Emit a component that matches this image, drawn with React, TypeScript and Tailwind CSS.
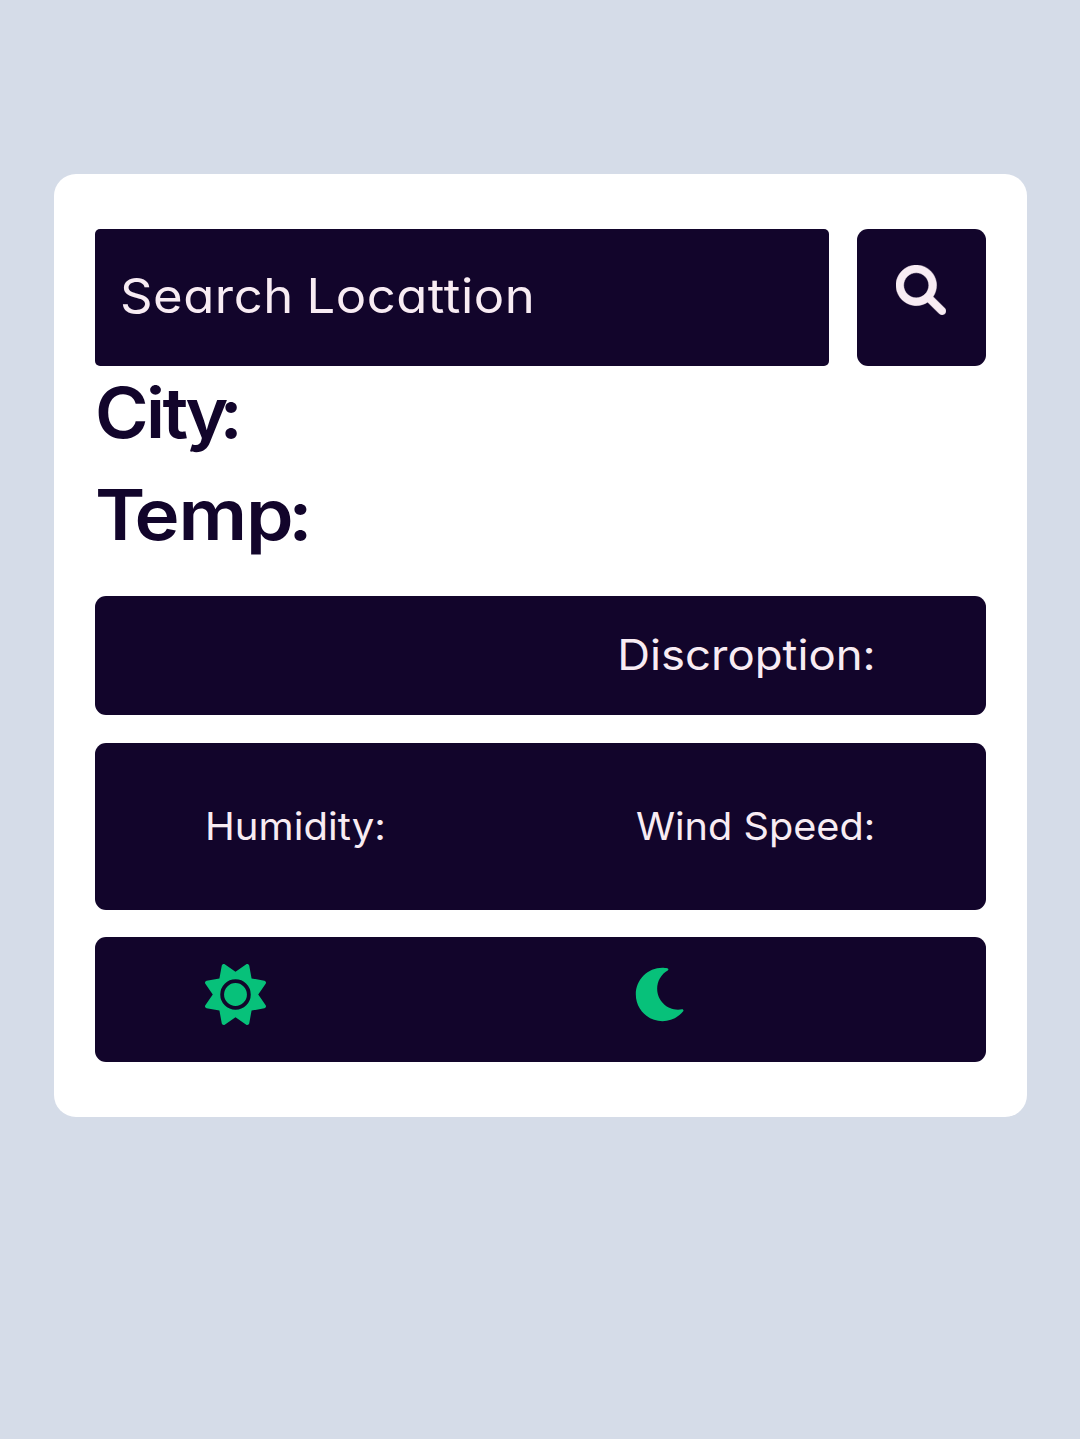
const panel = "flex items-center rounded-[11px] bg-[#12052b]";

function SearchIcon() {
  return (
    <svg viewBox="0 0 512 512" className="size-[50px]" fill="currentColor" stroke="currentColor" strokeWidth="4" aria-hidden="true">
      <path d="M500.3 443.7l-119.7-119.7c27.22-40.41 40.65-90.9 33.46-144.7C401.8 87.79 326.8 13.32 235.2 1.723C99.01-15.51-15.51 99.01 1.724 235.2c11.6 91.64 86.08 166.7 177.6 178.9c53.8 7.189 104.3-6.236 144.7-33.46l119.7 119.7c15.62 15.62 40.95 15.62 56.57 0C515.9 484.7 515.9 459.3 500.3 443.7zM79.1 208c0-70.58 57.42-128 128-128s128 57.42 128 128c0 70.58-57.42 128-128 128S79.1 278.6 79.1 208z" />
    </svg>
  );
}

function SunIcon() {
  return (
    <svg viewBox="0 0 512 512" className="size-[61px]" fill="currentColor" aria-hidden="true">
      <path d="M361.5 1.2c5 2.1 8.6 6.6 9.6 11.9L391 121l107.900 19.800c5.300 1 9.800 4.600 11.900 9.600s1.500 10.700-1.600 15.200L446.900 256l62.300 90.300c3.100 4.500 3.700 10.200 1.600 15.200s-6.600 8.600-11.900 9.600L391 391 371.100 498.900c-1 5.300-4.600 9.800-9.600 11.900s-10.700 1.500-15.200-1.600L256 446.900l-90.300 62.300c-4.500 3.100-10.200 3.700-15.200 1.600s-8.600-6.600-9.600-11.900L121 391 13.100 371.100c-5.300-1-9.800-4.600-11.900-9.600s-1.500-10.700 1.600-15.200L65.100 256 2.800 165.700c-3.100-4.500-3.700-10.200-1.600-15.200s6.600-8.600 11.900-9.600L121 121 140.900 13.100c1-5.300 4.600-9.800 9.600-11.900s10.700-1.500 15.200 1.600L256 65.100 346.300 2.800c4.500-3.100 10.200-3.700 15.200-1.600zM160 256a96 96 0 1 1 192 0 96 96 0 1 1 -192 0zm224 0a128 128 0 1 0 -256 0 128 128 0 1 0 256 0z" />
    </svg>
  );
}

function MoonIcon() {
  return (
    <svg viewBox="0 0 512 512" className="size-[61px]" fill="currentColor" aria-hidden="true">
      <path d="M32 256c0-123.8 100.3-224 223.8-224c11.36 0 29.7 1.668 40.9 3.746c9.616 1.777 11.75 14.63 3.279 19.44C245 86.5 211.2 144.6 211.2 207.8c0 109.7 99.71 193 208.3 172.3c9.561-1.805 16.28 9.324 10.11 16.95C387.9 448.6 324.8 480 255.8 480C132.1 480 32 379.6 32 256z" />
    </svg>
  );
}

export default function App() {
  return (
    <main className="min-h-[1439px] bg-[#d5dce8] pt-[174px] font-['Inter',sans-serif] whitespace-nowrap text-[#f8ecf3] [font-feature-settings:'cv11','ss03']">
      <section className="mx-auto h-[943px] w-[973px] rounded-[22px] bg-white px-[41px] pt-[55px]">
        <div className="flex h-[137px] gap-7">
          <div className="flex w-[734px] items-center rounded-[5px] bg-[#12052b] pb-[3px] pl-[25px]">
            <span className="origin-left scale-x-[1.058] text-[48px] leading-none tracking-[0.5px] [word-spacing:-2px]">Search Locattion</span>
          </div>
          <button type="button" aria-label="Search" className="flex w-[129px] justify-center rounded-[11px] bg-[#12052b] pt-[36px]">
            <SearchIcon />
          </button>
        </div>
        <h1 className="flex h-[93px] origin-left scale-x-[1.04] items-center text-[70px] leading-none font-semibold tracking-[-2.5px] text-[#12052b]">
          <span>Cit<span className="tracking-[-8.5px]">y:</span></span>
        </h1>
        <h1 className="flex h-[112px] origin-left scale-x-[1.09] items-center text-[70px] leading-none font-semibold tracking-[-1px] text-[#12052b]">
          <span><span className="tracking-[-10px]">T</span>em<span className="tracking-[-5px]">p:</span></span>
        </h1>
        <div className="mt-[25px] flex flex-col">
          <div className={`${panel} h-[119px] justify-end pr-[110px] pb-[2px]`}>
            <span className="origin-right scale-x-[1.083] text-[42px] leading-none">Discroption:</span>
          </div>
          <div className={`${panel} mt-7 h-[167px] justify-between px-[110px] pb-[2px] text-[38px] leading-none`}>
            <span className="origin-left scale-x-[1.057]">Humidity:</span>
            <span className="origin-right scale-x-[1.044]">Wind Speed:</span>
          </div>
          <div className={`${panel} mt-[27px] h-[125px] pb-[10px] pl-[110px] text-[#07c17a]`}>
            <SunIcon />
            <span className="ml-[366px]"><MoonIcon /></span>
          </div>
        </div>
      </section>
    </main>
  );
}
